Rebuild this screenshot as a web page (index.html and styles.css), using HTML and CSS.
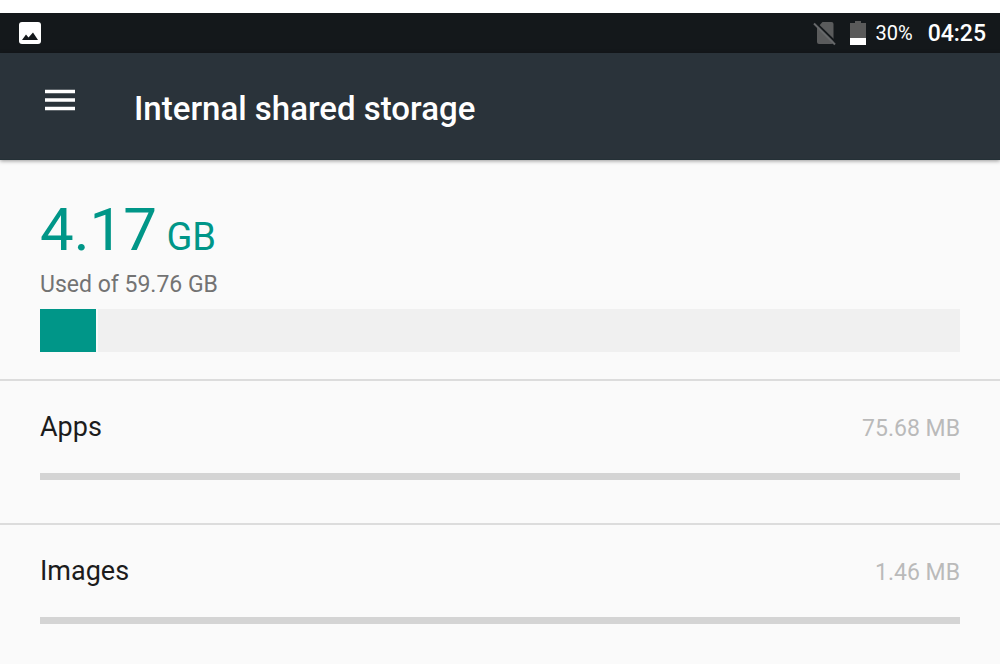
FILE: index.html
```html
<!DOCTYPE html>
<html lang="en">
<head>
<meta charset="utf-8">
<meta name="viewport" content="width=device-width, initial-scale=1">
<title>Internal shared storage</title>
<link rel="stylesheet" href="styles.css">
</head>
<body>
<div class="screen">
  <div class="status-bar">
    <svg class="status-picture" width="24" height="24" viewBox="0 0 24 24" aria-hidden="true">
      <rect x="1" y="1" width="22" height="22" rx="3" fill="#fff"/>
      <path d="M4 19 8 13.500 10.500 16.500 15 11.500 20 19Z" fill="#14181b"/>
    </svg>
    <div class="status-info">
      <svg class="status-sim" width="24" height="26" viewBox="0 0 24 26" aria-hidden="true">
        <path d="M9.500 2H18.500Q20.500 2 20.500 4V22Q20.500 24 18.500 24H6Q4 24 4 22V8Z" fill="#5a5b5c"/>
        <path d="M2.500 2.500 24 23.500" stroke="#14181b" stroke-width="2"/>
        <path d="M1 3.500 22 24.500" stroke="#66686a" stroke-width="2"/>
      </svg>
      <svg class="status-battery" width="16" height="26" viewBox="0 0 16 26" aria-hidden="true">
        <path d="M5 1H11V3H16V25H0V3H5Z" fill="#5a5a5a"/>
        <path d="M0 18H16V25H0Z" fill="#fff"/>
      </svg>
      <span class="status-percent">30%</span>
      <time class="status-time">04:25</time>
    </div>
  </div>
  <header class="app-bar">
    <button class="menu-button" type="button" aria-label="Open menu">
      <svg width="30" height="22" viewBox="0 0 30 22" aria-hidden="true">
        <path d="M0 2.500H30M0 11H30M0 19.500H30" stroke="#fff" stroke-width="3.400"/>
      </svg>
    </button>
    <h1 class="app-title">Internal shared storage</h1>
  </header>
  <main class="content">
    <section class="summary">
      <p class="used">4.17<span class="unit"> GB</span></p>
      <p class="total">Used of 59.76 GB</p>
      <div class="usage-bar"><div class="usage-fill" style="width: 6.1%"></div></div>
    </section>
    <section class="item">
      <div class="item-row"><h2 class="item-name">Apps</h2><span class="item-size">75.68 MB</span></div>
      <div class="item-bar"></div>
    </section>
    <section class="item">
      <div class="item-row"><h2 class="item-name">Images</h2><span class="item-size">1.46 MB</span></div>
      <div class="item-bar"></div>
    </section>
  </main>
</div>
</body>
</html>
```
FILE: styles.css
```css
* {
  box-sizing: border-box;
}

body {
  margin: 0;
  background: #fff;
  font-family: Roboto, "Liberation Sans", sans-serif;
}

h1,
h2,
p {
  margin: 0;
  font-weight: 400;
}

.screen {
  padding: 13px 0 5px;
}

.status-bar {
  display: flex;
  align-items: center;
  justify-content: space-between;
  height: 40px;
  padding: 0 14px 0 18px;
  background: #14181b;
  color: #fff;
}

.status-info {
  display: flex;
  align-items: center;
}

.status-battery {
  margin: 0 10px 0 13px;
}

.status-percent {
  margin-right: 15px;
  font-size: 20px;
  line-height: 40px;
}

.status-time {
  padding-top: 2px;
  font-size: 23px;
  font-weight: 500;
  line-height: 38px;
}

.app-bar {
  position: relative;
  display: flex;
  align-items: flex-start;
  gap: 59px;
  padding: 32px 45px 30px;
  background: #2a333a;
  border-bottom: 1px solid #243036;
  box-shadow: 0 1px 4px rgba(0, 0, 0, 0.4);
  color: #fff;
}

.menu-button {
  display: flex;
  padding: 4px 0;
  border: 0;
  background: none;
  cursor: pointer;
}

.app-title {
  padding-top: 4px;
  font-size: 33px;
  font-weight: 500;
  line-height: 40px;
}

.content {
  background: #fafafa;
}

.summary {
  padding: 38px 40px 27px;
}

.used {
  color: #009688;
  font-size: 60px;
  line-height: 64px;
}

.unit {
  font-size: 38px;
}

.total {
  margin-bottom: 8px;
  color: #737373;
  font-size: 23px;
  line-height: 32px;
}

.usage-bar {
  height: 43px;
  background: #f0f0f0;
}

.usage-fill {
  height: 100%;
  background: #009688;
  box-shadow: 2px 0 0 #fafafa;
}

.item {
  padding: 28px 40px 43px;
  border-top: 2px solid #dcdcdc;
}

.item:last-child {
  padding-bottom: 40px;
}

.item-row {
  display: flex;
  align-items: baseline;
  justify-content: space-between;
  height: 36px;
  margin-bottom: 28px;
  line-height: 36px;
}

.item-name {
  color: #1c1c1c;
  font-size: 27px;
}

.item-size {
  color: #bababa;
  font-size: 23px;
}

.item-bar {
  height: 7px;
  background: #d4d4d4;
}
```
